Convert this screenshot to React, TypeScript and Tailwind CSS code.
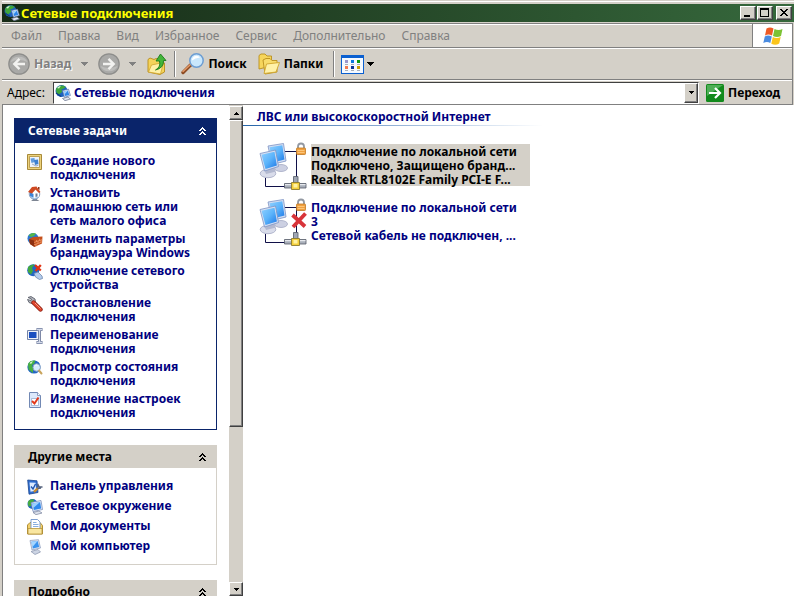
import type { ReactNode } from "react";
import clsx from "clsx";

type IconProps = { className?: string };

type Task = { icon: (props: IconProps) => ReactNode; text: string };

const GlobePcIcon = ({ className = "size-4" }: IconProps) => (
	<svg viewBox="0 0 16 16" className={clsx("shrink-0", className)} aria-hidden="true">
		<circle cx="6.500" cy="6" r="6" fill="#1d62c0" />
		<path d="M1 4Q3 0 8 .500L11 2 8 4 6.500 4 7 7 4 9.500 1.500 8Z" fill="#3fa63c" />
		<path d="M2 3Q3.500 1 6 .800L4 3.500Z" fill="#d8f3d0" />
		<path d="M1 8 6 11.500" stroke="#123c80" strokeWidth="1.200" />
		<path d="M7.500 5.500 13.500 4.200 15.400 10.500 9.500 12.300Z" fill="#e8eef8" stroke="#5a73a8" strokeWidth=".7" />
		<path d="M8.600 6.400 12.900 5.400 14.300 9.900 10.100 11.100Z" fill="#2f86e8" />
		<path d="M8.600 6.400 12.900 5.400 9.500 9.500Z" fill="#9fd2ff" />
		<path d="M7.500 13.500 13 12 15.500 14 10 15.700Z" fill="#e2e6ef" stroke="#66708a" strokeWidth=".7" />
	</svg>
);

const NetworkPlacesIcon = ({ className }: IconProps) => (
	<svg viewBox="0 0 16 16" className={clsx("size-4 shrink-0", className)} aria-hidden="true">
		<circle cx="5.500" cy="5" r="5" fill="#2266c4" />
		<path d="M.800 3.500Q2 0 6.500 .300L7 2.500 4 4 4 7 1.500 7.500Z" fill="#46ac40" />
		<path d="M4 3.500 14 1.500 15.500 10.500 6 12.500Z" fill="#e4ebf8" stroke="#6d84b4" strokeWidth=".7" />
		<path d="M5.200 4.500 13.100 3 14.200 9.600 6.900 11.100Z" fill="#2f88ec" />
		<path d="M5.200 4.500 13.100 3 6.300 9Z" fill="#9ad0ff" />
		<path d="M6 13.500 12 12 15 14 9 15.700Z" fill="#dde2ed" stroke="#79839c" strokeWidth=".7" />
	</svg>
);

const WizardIcon = ({ className }: IconProps) => (
	<svg viewBox="0 0 16 16" className={clsx("size-4 shrink-0", className)} aria-hidden="true">
		<path d="M.500 .500H14.500V15.500H.500Z" fill="#ecd27c" stroke="#a88a3a" />
		<path d="M2.500 2.500H12.500V13.500H2.500Z" fill="#eef3fb" stroke="#b08f3c" strokeWidth=".8" />
		<path d="M3.500 4.500 7.500 4 8 8 4.500 9Z" fill="#5f9bdf" />
		<path d="M7 6 11 5.500 11.500 10 8 11Z" fill="#3d80d0" />
		<path d="M5 10 9 12 11.500 11" stroke="#9aa7bd" fill="none" />
	</svg>
);

const HomeIcon = ({ className }: IconProps) => (
	<svg viewBox="0 0 16 16" className={clsx("size-4 shrink-0", className)} aria-hidden="true">
		<path d="M6 12H10V13.500L12.500 15H4L6 13.500Z" fill="#7d8592" />
		<circle cx="7.500" cy="8" r="5.300" fill="#a9cdf2" stroke="#7d93b5" strokeWidth=".8" />
		<path d="M5 6.500 9 3.500 12 6.500V10.500L7 12 4 10Z" fill="#fff" />
		<path d="M6.500 11.500V8L3 6V10Z" fill="#3b84d8" />
		<path d="M1 6 5 1 9.500 .500 13.500 6 12 7 8.500 3.500 5 7.500Z" fill="#cf4a22" />
		<path d="M11 1H12.500V4L11 3Z" fill="#8e3218" />
		<path d="M8.500 7.500H10.500V10.500L8.500 11Z" fill="#6b7b96" />
	</svg>
);

const FirewallIcon = ({ className }: IconProps) => (
	<svg viewBox="0 0 16 16" className={clsx("size-4 shrink-0", className)} aria-hidden="true">
		<circle cx="6" cy="6.500" r="5.500" fill="#2b76d2" />
		<path d="M1.500 3.500Q5 0 9 1.500L7 4 4 5Z" fill="#52b64b" />
		<path d="M2 7 6 5 15.500 4.500 15 11.500 7.500 15 3 12Z" fill="#c4501c" />
		<path d="M2 7 7 8.500 7.500 15 3 12Z" fill="#8c2f10" />
		<path d="M7 10.500 15.200 7.500M7 12.800 15 10M9.500 8V9.700M12.500 6.700V8.500M11 9V11.500M14 8V10.300M9 12.300V14.300" stroke="#f2a070" strokeWidth=".7" fill="none" />
	</svg>
);

const DisableIcon = ({ className }: IconProps) => (
	<svg viewBox="0 0 16 16" className={clsx("size-4 shrink-0", className)} aria-hidden="true">
		<circle cx="6.200" cy="6.200" r="6" fill="#2266c4" />
		<path d="M1 3Q4 0 7.500 .500L5 4 6 7 4 10.500 1 8Z" fill="#42a83e" />
		<path d="M7 9.500 11 8 15 12 15.500 14.500 12.500 15.500 8.500 13Z" fill="#b5cdec" stroke="#6d88ae" strokeWidth=".8" />
		<path d="M8 1.200 13.800 6.500M13.800 1 8.500 7" stroke="#e23414" strokeWidth="2.300" />
	</svg>
);

const RepairIcon = ({ className }: IconProps) => (
	<svg viewBox="0 0 16 16" className={clsx("size-4 shrink-0", className)} aria-hidden="true">
		<path d="M1 1.500 4 .500 8 3 8.500 6.500 6 8 2 6.500 .500 3.500 4 4.500 4.500 3Z" fill="#b0b3bb" stroke="#5e626c" strokeWidth=".9" />
		<path d="M6.500 6.500 13.500 13.500" stroke="#8e2214" strokeWidth="4.400" strokeLinecap="round" />
		<path d="M6.500 6.500 13.500 13.500" stroke="#e0452c" strokeWidth="2.800" strokeLinecap="round" />
		<path d="M8 7 13.500 12.500" stroke="#ffb39d" strokeWidth=".8" />
	</svg>
);

const RenameIcon = ({ className }: IconProps) => (
	<svg viewBox="0 0 16 16" className={clsx("size-4 shrink-0", className)} aria-hidden="true">
		<path d="M.500 2.500H11.500V11.500H.500Z" fill="#eef1f8" stroke="#7484a8" />
		<path d="M2 4H9.500V10H2Z" fill="#1a4fc0" />
		<path d="M9.500 1.500H15.500M9.500 14.500H15.500M12.500 1.500V14.500" stroke="#6f7b9c" strokeWidth="3" />
		<path d="M10 1.500H15M10 14.500H15M12.500 1.500V14.500" stroke="#d3daea" strokeWidth="1.300" />
	</svg>
);

const StatusIcon = ({ className }: IconProps) => (
	<svg viewBox="0 0 16 16" className={clsx("size-4 shrink-0", className)} aria-hidden="true">
		<circle cx="7" cy="7" r="6.600" fill="#2266c4" />
		<path d="M1 4Q3 0 8.500 .600L7 4 5 5 6 8 6 13 1.500 9.500Z" fill="#46b042" />
		<path d="M2.500 3Q4 1.200 6 1.200L4 4Z" fill="#dff5d8" />
		<circle cx="9.700" cy="7.500" r="3.700" fill="#d4ebff" stroke="#8ba3c4" />
		<path d="M12 10.500 14.500 13.500" stroke="#c9a45c" strokeWidth="2" strokeLinecap="round" />
		<path d="M7.500 6A2.400 2.400 0 0 1 10.500 5.200" stroke="#fff" fill="none" />
	</svg>
);

const SettingsIcon = ({ className }: IconProps) => (
	<svg viewBox="0 0 16 16" className={clsx("size-4 shrink-0", className)} aria-hidden="true">
		<path d="M2.500 .500H10.500L13.500 3.500V15.500H2.500Z" fill="#dce9fb" stroke="#7289b4" />
		<path d="M10.500 .500V3.500H13.500" fill="#fff" stroke="#7289b4" strokeWidth=".8" />
		<path d="M4.500 6.500H11.500V13.500H4.500Z" fill="#fff" stroke="#8fa3c6" strokeWidth=".7" />
		<path d="M5 9 7.500 11.500 11.500 5.500" stroke="#e2391b" strokeWidth="2" fill="none" />
	</svg>
);

const ControlPanelIcon = ({ className }: IconProps) => (
	<svg viewBox="0 0 16 16" className={clsx("size-4 shrink-0", className)} aria-hidden="true">
		<path d="M.700 1 10 1.800 11 13.500 2 15.200Z" fill="#2f6ed0" stroke="#1c4690" strokeWidth=".8" />
		<path d="M2.500 3.500 8.500 3.800 9.300 11.500 3.500 12.800Z" fill="#dcebff" />
		<path d="M4 7.500 6 10 8.500 5" stroke="#1f56b0" strokeWidth="1.400" fill="none" />
		<path d="M7 13 11 9" stroke="#c98a2c" strokeWidth="2.400" />
		<path d="M10.500 5 12 8 15.500 8M10.500 9.500 14 9" stroke="#56637e" strokeWidth="1.700" fill="none" />
	</svg>
);

const DocumentsIcon = ({ className }: IconProps) => (
	<svg viewBox="0 0 16 16" className={clsx("size-4 shrink-0", className)} aria-hidden="true">
		<path d="M.500 6 3 3.500H13L15.500 6.500V15H.500Z" fill="#f3d06a" stroke="#a8852a" strokeWidth=".9" />
		<path d="M4 .500H10.500L13 3V11H4Z" fill="#fff" stroke="#6f94cc" strokeWidth=".9" />
		<path d="M6 3.500H9.500M6 5.500H11.500M6 7.500H11.500" stroke="#7ba5dd" strokeWidth=".9" />
		<path d="M1 9.500H15V15H1Z" fill="#f9e6a0" stroke="#b8963a" strokeWidth=".8" />
	</svg>
);

const ComputerIcon = ({ className }: IconProps) => (
	<svg viewBox="0 0 16 16" className={clsx("size-4 shrink-0", className)} aria-hidden="true">
		<path d="M3 1.500 11.500 .700 13.500 9 5 11Z" fill="#dce4f2" stroke="#8797b8" strokeWidth=".7" />
		<path d="M4.300 2.700 10.600 2 12.200 8 5.900 9.500Z" fill="#3b93ee" />
		<path d="M4.300 2.700 10.600 2 5.500 8Z" fill="#a6d6ff" />
		<path d="M4 12.500 11 10.500 13.500 13 8 15.500Z" fill="#cdd5e4" stroke="#8590aa" strokeWidth=".7" />
	</svg>
);

const RoundArrowIcon = ({ className }: IconProps) => (
	<svg viewBox="0 0 22 22" className={clsx("size-[22px] shrink-0", className)} aria-hidden="true">
		<circle cx="11" cy="11" r="10.200" fill="#a9a9a7" stroke="#8d8d8b" strokeWidth="1.200" />
		<path d="M2.500 9A9 8 0 0 1 19.500 9Q11 5 2.500 9Z" fill="#bdbdbb" />
		<path d="M17 11H6M11.500 5.800 6.300 11 11.500 16.200" stroke="#f2f2f0" strokeWidth="2.400" fill="none" />
	</svg>
);

const UpFolderIcon = () => (
	<svg viewBox="0 0 20 22" className="h-[22px] w-5 shrink-0" aria-hidden="true">
		<path d="M1 6.500 3 5 7 6.500 9 5.500 14 7 17.500 10V19L13 21.500 1 19Z" fill="#f5d35a" stroke="#b88c1c" strokeWidth=".9" />
		<path d="M4.500 12 16.500 9.500 13.500 21 1.500 19Z" fill="#fff0a6" stroke="#cfa52e" strokeWidth=".8" />
		<path d="M8.500 17Q14 14 12.500 8H9L13.500 1 19 7.500H16.500Q17 15 8.500 17Z" fill="#43b53a" stroke="#1c7a1a" strokeWidth=".9" />
	</svg>
);

const SearchIcon = () => (
	<svg viewBox="0 0 24 22" className="h-[22px] w-6 shrink-0" aria-hidden="true">
		<path d="M2 19.500 9.500 12" stroke="#8c4a22" strokeWidth="3.400" strokeLinecap="round" />
		<path d="M2 18.500 9.500 11.500" stroke="#e39a68" strokeWidth="1.500" strokeLinecap="round" />
		<circle cx="15.500" cy="7.500" r="6.700" fill="#c9e7fc" stroke="#6d9dd2" strokeWidth="1.500" />
		<path d="M11 7.500A4.500 4.500 0 0 1 19 4.500Q14 5 11 7.500Z" fill="#fff" />
	</svg>
);

const FoldersIcon = () => (
	<svg viewBox="0 0 22 22" className="size-[22px] shrink-0" aria-hidden="true">
		<path d="M1 2.500 3 1H7L9 3H13.500V13L1 16Z" fill="#f6d55c" stroke="#b98e1e" strokeWidth=".9" />
		<path d="M5 7 8 5.500H12L14 7.500H19V19L7 21Z" fill="#f8dc6c" stroke="#b98e1e" strokeWidth=".9" />
		<path d="M8.500 11 21.500 9.500 18 19 6 20.500Z" fill="#fff1a8" stroke="#cfa52e" strokeWidth=".9" />
	</svg>
);

const ViewsIcon = () => (
	<svg viewBox="0 0 23 19" className="h-[19px] w-[23px] shrink-0" shapeRendering="crispEdges" aria-hidden="true">
		<path d="M0 0H23V19H0Z" fill="#0a5fd0" />
		<path d="M1 3H22V18H1Z" fill="#f4f9ff" />
		<path d="M4 5h3v3H4z" fill="#9a96cc" />
		<path d="M10 5h3v3h-3z" fill="#0a78e0" />
		<path d="M16 5h3v3h-3z" fill="#0a9a14" />
		<path d="M4 11h3v3H4z" fill="#f47a50" />
		<path d="M10 11h3v3h-3z" fill="#0a3296" />
		<path d="M16 11h3v3h-3z" fill="#cc9a06" />
		<path d="M4 9h3v1H4zM10 9h3v1h-3zM16 9h3v1h-3zM4 15h3v1H4zM10 15h3v1h-3zM16 15h3v1h-3z" fill="#a8aeb8" />
	</svg>
);

const GoIcon = () => (
	<svg viewBox="0 0 18 18" className="size-[18px] shrink-0" aria-hidden="true">
		<rect width="18" height="18" rx="1.500" fill="#128a1c" />
		<path d="M1 1H17L1 12Z" fill="#4fae56" />
		<path d="M3 9H14M9 4 14 9 9 14" stroke="#fff" strokeWidth="2.200" fill="none" />
	</svg>
);

const FlagIcon = () => (
	<svg viewBox="0 0 20 18" className="h-[18px] w-5 shrink-0" aria-hidden="true">
		<path d="M3.500 1.500Q7 -.500 10.500 1.500L9 8.500Q5.500 6.500 2 8.500Z" fill="#ee5a24" />
		<path d="M11.500 2Q15.500 4 19.500 2L18 9Q14 11 10 9Z" fill="#7cc234" />
		<path d="M1.800 9.500Q5 7.500 8.800 9.500L7.300 16Q4 14 .300 16Z" fill="#4a8be0" />
		<path d="M9.800 10Q13.500 12 17.700 10L16.200 16.500Q12.500 19 8.300 16.800Z" fill="#fbc51c" />
	</svg>
);

const TriangleIcon = ({ className }: IconProps) => (
	<svg viewBox="0 0 7 4" className={clsx("h-1 w-[7px] shrink-0", className)} shapeRendering="crispEdges" fill="currentColor" aria-hidden="true">
		<path d="M0 0H7V1H6V2H5V3H4V4H3V3H2V2H1V1H0Z" />
	</svg>
);

const SmallTriangleIcon = ({ className }: IconProps) => (
	<svg viewBox="0 0 5 3" className={clsx("h-[3px] w-[5px] shrink-0", className)} shapeRendering="crispEdges" aria-hidden="true">
		<path d="M0 0H5V1H4V2H3V3H2V2H1V1H0Z" />
	</svg>
);

const ChevronsIcon = () => (
	<svg viewBox="0 0 7 8" className="h-2 w-[7px]" fill="currentColor" shapeRendering="crispEdges" aria-hidden="true">
		<path d="M3 0H4V1H5V2H6V3H7V4H5V3H4V2H3V3H2V4H0V3H1V2H2V1H3Z" />
		<path d="M3 4H4V5H5V6H6V7H7V8H5V7H4V6H3V7H2V8H0V7H1V6H2V5H3Z" />
	</svg>
);

const ConnectionIcon = ({ unplugged }: { unplugged?: boolean }) => (
	<svg viewBox="0 0 48 48" className="size-12 shrink-0" aria-hidden="true">
		<defs>
			<linearGradient id="screen" x1="0" y1="0" x2="1" y2="1">
				<stop offset="0" stopColor="#8fd0ff" />
				<stop offset=".5" stopColor="#5cb4fb" />
				<stop offset="1" stopColor="#1d78e6" />
			</linearGradient>
		</defs>
		<path d="M26 9.500H37.500V35M6.500 36V44.500H26" stroke="#101048" fill="none" />
		<ellipse cx="22" cy="26" rx="6.500" ry="3.500" fill="#ccd0e2" stroke="#9ba1bd" strokeWidth=".7" />
		<path d="M9 4 24.500 1.500 27 19 13 22.500Z" fill="#d5dff2" stroke="#7c93c4" strokeWidth=".8" />
		<path d="M10.500 5.300 23.300 3.200 25.500 17.500 14 20.500Z" fill="url(#screen)" />
		<ellipse cx="9" cy="31.500" rx="7.800" ry="4.200" fill="#d9dcea" stroke="#9ba1bd" strokeWidth=".7" />
		<path d="M5 27 15 25 17 29.500 7 32Z" fill="#b3b9d0" />
		<path d="M1 11.500 16.500 8 19.500 24.500 5.500 29Z" fill="#d5dff2" stroke="#7c93c4" strokeWidth=".8" />
		<path d="M2.500 12.700 15.500 9.700 17.900 23.400 6.500 27Z" fill="url(#screen)" />
		<path d="M39 6.500V4.500Q39 1.500 42 1.500T45 4.500V6.500" stroke="#9298a2" strokeWidth="1.800" fill="none" />
		<rect x="37.500" y="6" width="9" height="6.500" rx=".8" fill="#f0a040" stroke="#c07a24" strokeWidth=".8" />
		<path d="M38.500 8.500H45.500M38.500 10.500H45.500" stroke="#ffcf88" strokeWidth=".8" />
		<path d="M34.500 34.500H39V41H34.500Z" fill="#9fa6b3" stroke="#565c68" strokeWidth=".8" />
		<path d="M25.500 41.500H47V46H25.500Z" fill="#a9afba" stroke="#565c68" strokeWidth=".8" />
		<path d="M26 42.700H46.500" stroke="#f4f6f9" />
		<path d="M32.500 40.500H40.500V47.500H32.500Z" fill="#f4cf3c" stroke="#8c7a30" strokeWidth=".9" />
		<path d="M34.500 42H38.500V45.500H34.500Z" fill="#fff2a4" />
		{unplugged && <path d="M33.500 17 46 28.500M46.500 15.500 34 29" stroke="#d8343a" strokeWidth="3.800" />}
	</svg>
);

const networkTasks: Task[] = [
	{ icon: WizardIcon, text: "Создание нового\nподключения" },
	{ icon: HomeIcon, text: "Установить\nдомашнюю сеть или\nсеть малого офиса" },
	{ icon: FirewallIcon, text: "Изменить параметры\nбрандмауэра Windows" },
	{ icon: DisableIcon, text: "Отключение сетевого\nустройства" },
	{ icon: RepairIcon, text: "Восстановление\nподключения" },
	{ icon: RenameIcon, text: "Переименование\nподключения" },
	{ icon: StatusIcon, text: "Просмотр состояния\nподключения" },
	{ icon: SettingsIcon, text: "Изменение настроек\nподключения" },
];

const otherPlaces: Task[] = [
	{ icon: ControlPanelIcon, text: "Панель управления" },
	{ icon: NetworkPlacesIcon, text: "Сетевое окружение" },
	{ icon: DocumentsIcon, text: "Мои документы" },
	{ icon: ComputerIcon, text: "Мой компьютер" },
];

const menuItems = ["Файл", "Правка", "Вид", "Избранное", "Сервис", "Дополнительно", "Справка"];

const connections = [
	{
		lines: ["Подключение по локальной сети", "Подключено, Защищено бранд...", "Realtek RTL8102E Family PCI-E F..."],
		selected: true,
	},
	{
		lines: ["Подключение по локальной сети", "3", "Сетевой кабель не подключен, ..."],
		unplugged: true,
	},
];

const raised = "border border-t-white border-l-white border-r-[#404040] border-b-[#404040] bg-[#d4d0c8] shadow-[inset_-1px_-1px_0_#808080]";

const WindowButton = ({ label, children }: { label: string; children: ReactNode }) => (
	<button type="button" aria-label={label} className={clsx(raised, "h-[14px] w-4")}>
		<svg viewBox="0 0 14 12" className="h-3 w-[14px]" shapeRendering="crispEdges" aria-hidden="true">
			{children}
		</svg>
	</button>
);

const TaskPanel = ({ title, tasks, primary }: { title: string; tasks: Task[]; primary?: boolean }) => (
	<section className={clsx("border", primary ? "border-[#0a246a]" : "border-[#d4d0c8]")}>
		<h2>
			<button
				type="button"
				className={clsx(
					"flex w-full items-center justify-between pr-[10px] pl-[13px]",
					primary ? "h-6 bg-[#0a246a] text-white" : "h-[22px] bg-[#d4d0c8] text-black",
				)}
			>
				{title}
				<ChevronsIcon />
			</button>
		</h2>
		<ul className="flex flex-col gap-1 pt-[11px] pb-[9px] pl-3">
			{tasks.map(({ icon: Icon, text }) => (
				<li key={text}>
					<a href="#" className="flex min-h-4 gap-[7px] whitespace-pre-line">
						<Icon />
						{text}
					</a>
				</li>
			))}
		</ul>
	</section>
);

const App = () => {
	return (
		<div className="flex h-screen flex-col overflow-hidden border-l-2 border-[#d4d0c8] bg-white font-['Noto_Sans',sans-serif] text-xs leading-[14px] font-bold text-[#000080]">
			<header className="bg-[#d4d0c8] text-black">
				<div className="h-1 border-t border-[#d4d0c8] shadow-[inset_0_1px_0_#fff]" />
				<div className="flex h-[18px] items-center gap-px bg-linear-to-r from-[#162a16] to-[#36683c] pr-[2px] pl-[2px]">
					<GlobePcIcon />
					<h1 className="flex-1 text-[13px] text-[#ffff00]">Сетевые подключения</h1>
					<WindowButton label="Свернуть">
						<path d="M3 8H9V10H3Z" />
					</WindowButton>
					<WindowButton label="Развернуть">
						<path d="M2 1H11V10H2ZM3 3V9H10V3Z" fillRule="evenodd" />
					</WindowButton>
					<div className="w-px" />
					<WindowButton label="Закрыть">
						<path d="M3 2H5V3H6V4H8V3H9V2H11V3H10V4H9V5H8V6H9V7H10V8H11V9H9V8H8V7H6V8H5V9H3V8H4V7H5V6H6V5H5V4H4V3H3Z" />
					</WindowButton>
				</div>

				<div className="mt-px mr-px border-r border-[#808080]">
					<nav className="flex h-[25px] border-y border-t-[#808080] border-b-[#808080] font-normal text-[#808080] shadow-[inset_0_1px_0_#fff]">
						<ul className="flex flex-1 items-center gap-4 pl-[9px]">
							{menuItems.map((item) => (
								<li key={item}>
									<button type="button">{item}</button>
								</li>
							))}
						</ul>
						<div className="flex w-10 items-center justify-center border-l border-[#808080] bg-white">
							<FlagIcon />
						</div>
					</nav>

					<div className="flex h-8 items-center border-t border-b border-t-white border-b-[#808080]">
						<button type="button" className="flex items-center gap-1 pl-[6px] text-[#808080] [text-shadow:1px_1px_0_#fff]">
							<RoundArrowIcon />
							Назад
						</button>
						<TriangleIcon className="ml-[10px] text-[#808080]" />
						<button type="button" aria-label="Вперёд" className="ml-[10px]">
							<RoundArrowIcon className="rotate-180" />
						</button>
						<TriangleIcon className="ml-[9px] text-[#808080]" />
						<button type="button" aria-label="Вверх" className="ml-[11px]">
							<UpFolderIcon />
						</button>
						<div className="ml-[7px] h-[26px] w-[2px] border-l border-[#808080] bg-white" />
						<button type="button" className="ml-[5px] flex items-center gap-[3px]">
							<SearchIcon />
							Поиск
						</button>
						<button type="button" className="ml-[11px] flex items-center gap-1">
							<FoldersIcon />
							Папки
						</button>
						<div className="ml-[10px] h-[26px] w-[2px] border-l border-[#808080] bg-white" />
						<button type="button" aria-label="Вид" className="ml-[6px] flex items-center gap-[3px]">
							<ViewsIcon />
							<TriangleIcon />
						</button>
					</div>

					<div className="flex h-[25px] items-center border-t border-b border-t-white border-b-[#808080] pl-[5px]">
						<label htmlFor="address" className="w-[46px] font-normal">
							Адрес:
						</label>
						<div className="flex h-[22px] flex-1 items-center border border-t-[#404040] border-r-white border-b-white border-l-[#404040] bg-white pl-px">
							<GlobePcIcon />
							<input
								id="address"
								defaultValue="Сетевые подключения"
								className="ml-[3px] min-w-0 flex-1 bg-transparent text-[#000080] outline-none"
							/>
							<button type="button" aria-label="Список адресов" className={clsx(raised, "flex h-5 w-[14px] items-center justify-center")}>
								<SmallTriangleIcon />
							</button>
						</div>
						<button type="button" className="flex w-[93px] items-center gap-1 pl-[7px]">
							<GoIcon />
							Переход
						</button>
					</div>
				</div>
			</header>

			<div className="flex min-h-0 flex-1 border-l border-[#808080]">
				<aside className="flex w-[226px] shrink-0 flex-col gap-[15px] overflow-hidden pt-[13px] pr-3 pl-[11px]">
					<TaskPanel title="Сетевые задачи" tasks={networkTasks} primary />
					<TaskPanel title="Другие места" tasks={otherPlaces} />
					<TaskPanel title="Подробно" tasks={[]} />
				</aside>

				<div className="flex w-[14px] shrink-0 flex-col bg-[#d4d0c8] pt-px">
					<button type="button" aria-label="Прокрутить вверх" className={clsx(raised, "flex h-[14px] items-center justify-center")}>
						<SmallTriangleIcon className="rotate-180" />
					</button>
					<div className={clsx(raised, "h-[307px]")} />
					<button type="button" aria-label="Прокрутить вниз" className={clsx(raised, "mt-auto flex h-[14px] items-center justify-center")}>
						<SmallTriangleIcon />
					</button>
				</div>

				<main className="min-w-0 flex-1">
					<h2 className="px-[14px] pt-[5px] pb-px">ЛВС или высокоскоростной Интернет</h2>
					<div className="h-px w-[300px] bg-linear-to-r from-[#2464a8] to-white" />
					<ul className="flex flex-col gap-2 pt-4 pl-4">
						{connections.map(({ lines, selected, unplugged }) => (
							<li key={lines[2]} className="flex h-12 gap-1">
								<ConnectionIcon unplugged={unplugged} />
								<div className={clsx("mt-[2px] h-[42px] w-[219px] pt-px whitespace-nowrap", selected && "bg-[#d4d0c8] text-black")}>
									{lines.map((line) => (
										<p key={line}>{line}</p>
									))}
								</div>
							</li>
						))}
					</ul>
				</main>
			</div>
		</div>
	);
};

export default App;
